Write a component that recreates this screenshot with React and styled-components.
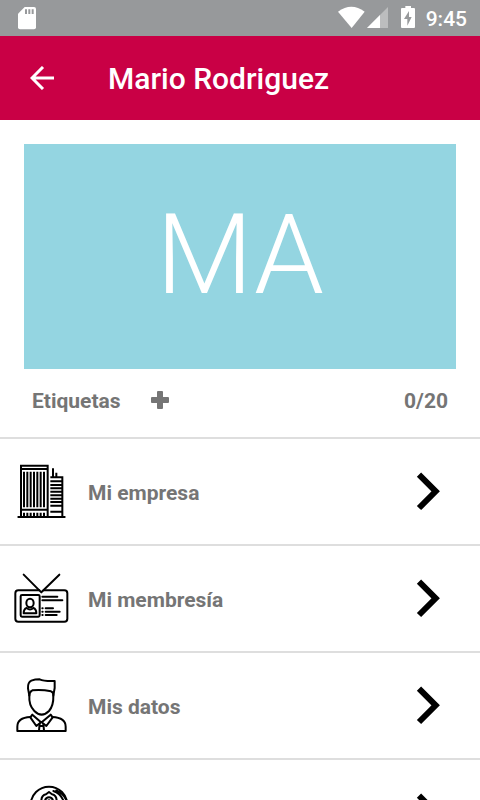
import React from "react";
import styled, { createGlobalStyle } from "styled-components";

const GlobalStyle = createGlobalStyle`
  *, *::before, *::after { box-sizing: border-box; }
  html, body, #root { height: 100%; }
  body {
    margin: 0;
    background: #fff;
    color: #757575;
    font-family: Roboto, "Liberation Sans", sans-serif;
  }
`;

const Screen = styled.div`
  display: flex;
  flex-direction: column;
  height: 100%;
  overflow: hidden;
`;

const StatusBar = styled.div`
  flex: none;
  display: flex;
  align-items: center;
  justify-content: space-between;
  height: 36px;
  padding: 0 13px 0 18px;
  background: #97999b;
  color: #fff;
`;

const StatusGroup = styled.div`
  display: flex;
  align-items: center;
`;

const Clock = styled.time`
  margin-left: 10px;
  padding-top: 2px;
  font-size: 21px;
  font-weight: 500;
  line-height: 34px;
`;

const AppBar = styled.header`
  flex: none;
  display: flex;
  align-items: center;
  height: 84px;
  background: #c90045;
  color: #fff;
`;

const BackButton = styled.button`
  display: flex;
  align-items: center;
  justify-content: center;
  width: 84px;
  height: 84px;
  padding: 0;
  border: 0;
  background: none;
  color: inherit;
`;

const Title = styled.h1`
  margin: 0 0 0 24px;
  padding-top: 2px;
  font-size: 30px;
  font-weight: 500;
  line-height: 40px;
`;

const Content = styled.main`
  flex: 1;
  min-height: 0;
  overflow: hidden;
`;

const Initials = styled.div`
  display: flex;
  align-items: center;
  justify-content: center;
  height: 225px;
  margin: 24px 24px 0;
  padding-bottom: 3px;
  background: #94d5e1;
  color: #fff;
  font-size: 112px;
  font-weight: 300;
  line-height: 128px;
`;

const Tags = styled.section`
  display: flex;
  align-items: center;
  height: 68px;
  padding: 0 32px 4px;
  font-size: 21px;
  font-weight: 700;
`;

const AddButton = styled.button`
  display: flex;
  margin-left: 30px;
  padding: 0 0 2px;
  border: 0;
  background: none;
  color: inherit;
`;

const Count = styled.span`
  margin-left: auto;
`;

const Menu = styled.nav`
  display: flex;
  flex-direction: column;
`;

const MenuItem = styled.a`
  display: flex;
  align-items: center;
  height: 107px;
  padding: 0 40px 0 13px;
  border-top: 2px solid #dedede;
  color: inherit;
  font-size: 21px;
  font-weight: 700;
  text-decoration: none;
`;

const MenuLabel = styled.span`
  flex: 1;
  padding: 2px 0 0 18px;
`;

const LineIcon = styled.svg.attrs({ width: 57, height: 57, "aria-hidden": true })`
  flex: none;
  fill: none;
  stroke: #000;
  stroke-width: 6;
  stroke-linecap: round;
  stroke-linejoin: round;
`;

const CompanyIcon = () => (
  <LineIcon viewBox="39 39 171 171">
    <path strokeLinecap="butt" strokeLinejoin="miter" d="M63 200V47H143V200M62 57H143M62 179H143M151 82H187V200" />
    <path strokeLinecap="butt" d="M72 65V172M82 65V172M92 65V172M102 65V172M112 65V172M122 65V172M132 65V172" />
    <path strokeLinecap="butt" d="M72 188V200M82 188V200M92 188V200M102 188V200M112 188V200M122 188V200M132 188V200" />
    <path strokeLinecap="butt" d="M151 94H187M151 105H187M151 115H187M151 125H187M151 136H187M151 146H187M151 156H187M151 167H187M151 185H187M159 82V55M169 82V68" />
    <path d="M55 201H194" />
  </LineIcon>
);

const MembershipIcon = () => (
  <LineIcon viewBox="39 30 171 171">
    <path d="M71 44L124 97L178 44" />
    <path d="M118 91H55Q46 91 46 100V176Q46 185 55 185H193Q202 185 202 176V100Q202 91 193 91H131" />
    <rect x="62" y="105" width="57" height="65" rx="4" />
    <ellipse cx="90" cy="129" rx="11" ry="13" />
    <path d="M80 144Q71 147 71 160H109Q109 147 100 144Q90 153 80 144Z" />
    <path d="M127 110H172M127 121H187M137 145H159M137 155H179M137 165H170M127 145H128M127 155H128M127 165H128" />
  </LineIcon>
);

const ProfileIcon = () => (
  <LineIcon viewBox="39 36 171 171">
    <path d="M88 92L84 70Q83 52 94 47Q105 43 119 43Q131 49 164 48V69L160 92" />
    <path d="M88 92Q88 80 97 76Q125 73 153 79Q161 82 160 92Q161 121 147 138Q125 160 103 138Q86 121 88 92Z" />
    <path d="M91 156Q52 158 52 185V198H197V185Q197 158 157 156" />
    <path d="M97 149L91 157L109 183L123 172L97 149ZM152 149L158 157L139 183L125 172L152 149Z" />
    <path d="M119 176L117 197M130 176L132 197M119 183H130" />
  </LineIcon>
);

const BadgeIcon = () => (
  <LineIcon viewBox="39 102 171 171">
    <circle cx="147" cy="165" r="55" />
    <path d="M160 123Q181 130 190 151M169 121Q189 130 198 148" />
    <path d="M124 156Q123 136 138 133L147 126L156 133Q171 136 170 156" />
    <path d="M134 156Q136 142 147 142Q158 142 160 156M142 154Q147 148 152 154" />
    <path d="M124 156Q124 183 147 184Q170 183 170 156M107 203Q147 179 187 203" />
  </LineIcon>
);

const Chevron = () => (
  <svg width="24" height="39" viewBox="78 36 72 117" aria-hidden="true">
    <path d="M87 44L137 94L87 144" fill="none" stroke="#000" strokeWidth="18" />
  </svg>
);

const SdCardIcon = () => (
  <svg width="18" height="23" viewBox="54 20 54 69" role="img" aria-label="Tarjeta SD">
    <path fill="#fff" d="M74 20H102Q108 20 108 26V81Q108 87 102 87H60Q54 87 54 81V40Z" />
    <path fill="#97999b" d="M75 27H81V41H75ZM85 27H91V41H85ZM95 27H101V41H95Z" />
  </svg>
);

const SignalIcons = () => (
  <svg width="78" height="24" viewBox="54 18 234 72" role="img" aria-label="Wi-Fi, señal y batería">
    <path fill="#fff" d="M54 35Q94 6 134 35L95 84Z" />
    <path fill="#bcbdbe" d="M204 21V84H141Z" />
    <path fill="#fff" d="M180 45V84H141Z" />
    <path fill="#fff" d="M256 18H273V24H282Q285 24 285 27V81Q285 84 282 84H246Q243 84 243 81V27Q243 24 246 24H256Z" />
    <path fill="#97999b" d="M267 33L252 57H262V77L275 51H267Z" />
  </svg>
);

const BackIcon = () => (
  <svg width="24" height="24" viewBox="0 0 24 24" aria-hidden="true">
    <path d="M13 1L2 12L13 23M2 12H24" fill="none" stroke="currentColor" strokeWidth="3" />
  </svg>
);

const PlusIcon = () => (
  <svg width="18" height="18" viewBox="0 0 18 18" aria-hidden="true">
    <path
      fill="currentColor"
      d="M7 0H11Q12 0 12 1V6H17Q18 6 18 7V11Q18 12 17 12H12V17Q12 18 11 18H7Q6 18 6 17V12H1Q0 12 0 11V7Q0 6 1 6H6V1Q6 0 7 0Z"
    />
  </svg>
);

const items = [
  { id: "empresa", label: "Mi empresa", Icon: CompanyIcon },
  { id: "membresia", label: "Mi membresía", Icon: MembershipIcon },
  { id: "datos", label: "Mis datos", Icon: ProfileIcon },
  { id: "insignia", label: "", Icon: BadgeIcon },
];

export default function App() {
  return (
    <Screen>
      <GlobalStyle />
      <StatusBar>
        <SdCardIcon />
        <StatusGroup>
          <SignalIcons />
          <Clock>9:45</Clock>
        </StatusGroup>
      </StatusBar>
      <AppBar>
        <BackButton type="button" aria-label="Volver">
          <BackIcon />
        </BackButton>
        <Title>Mario Rodriguez</Title>
      </AppBar>
      <Content>
        <Initials>MA</Initials>
        <Tags>
          <span>Etiquetas</span>
          <AddButton type="button" aria-label="Añadir etiqueta">
            <PlusIcon />
          </AddButton>
          <Count>0/20</Count>
        </Tags>
        <Menu>
          {items.map(({ id, label, Icon }) => (
            <MenuItem key={id} href={`#${id}`} aria-label={label || "Insignia"}>
              <Icon />
              <MenuLabel>{label}</MenuLabel>
              <Chevron />
            </MenuItem>
          ))}
        </Menu>
      </Content>
    </Screen>
  );
}
